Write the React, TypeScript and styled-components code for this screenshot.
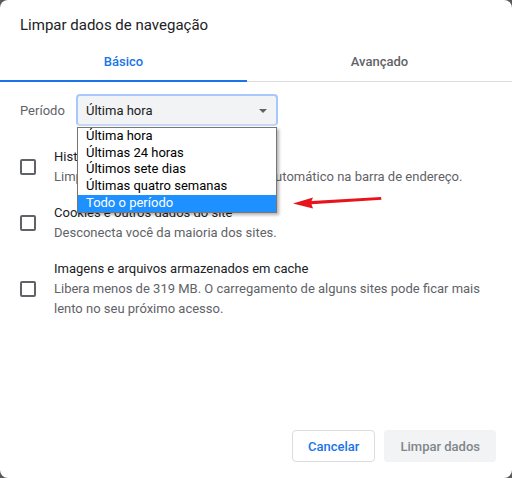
import React from "react";
import styled, { createGlobalStyle } from "styled-components";

const GlobalStyle = createGlobalStyle`
  html, body {
    margin: 0;
    padding: 0;
    background: #595959;
  }
  body {
    font-family: Roboto, "Noto Sans", "Liberation Sans", sans-serif;
  }
`;

const periods = [
  "Última hora",
  "Últimas 24 horas",
  "Últimos sete dias",
  "Últimas quatro semanas",
  "Todo o período",
];

const items = [
  {
    title: "Histórico de navegação",
    desc: ["Limpa o histórico e o preenchimento automático na barra de endereço."],
  },
  {
    title: "Cookies e outros dados do site",
    desc: ["Desconecta você da maioria dos sites."],
  },
  {
    title: "Imagens e arquivos armazenados em cache",
    desc: ["Libera menos de 319 MB. O carregamento de alguns sites pode ficar mais lento no seu próximo acesso."],
  },
];

export default function App() {
  return (
    <>
      <GlobalStyle />
      <Dialog>
        <Title>Limpar dados de navegação</Title>
        <Tabs>
          <Tab $active>Básico</Tab>
          <Tab>Avançado</Tab>
        </Tabs>
        <Body>
          <PeriodRow>
            <Label>Período</Label>
            <SelectWrap>
              <Select>
                Última hora
                <Caret />
              </Select>
              <ListBox>
                {periods.map((p, i) => (
                  <Option key={p} $selected={i === periods.length - 1}>
                    {p}
                  </Option>
                ))}
              </ListBox>
            </SelectWrap>
          </PeriodRow>
          <Items>
            {items.map((it) => (
              <Row key={it.title}>
                <Checkbox />
                <RowText>
                  <RowTitle>{it.title}</RowTitle>
                  {it.desc.map((d) => (
                    <RowDesc key={d}>{d}</RowDesc>
                  ))}
                </RowText>
              </Row>
            ))}
          </Items>
        </Body>
        <Footer>
          <CancelButton>Cancelar</CancelButton>
          <ClearButton>Limpar dados</ClearButton>
        </Footer>
        <Arrow width="100" height="20" viewBox="0 0 100 20">
          <polygon
            points="7,13.5 27,7.5 25.5,11 95,7 95.5,9.8 25.5,14.3 27,18.5"
            fill="#e8141c"
          />
        </Arrow>
      </Dialog>
    </>
  );
}

const Dialog = styled.div`
  position: relative;
  width: 512px;
  height: 478px;
  background: #fff;
  border-radius: 8px;
  display: flex;
  flex-direction: column;
  overflow: hidden;
`;

const Title = styled.div`
  padding: 15px 20px 0;
  font-size: 15px;
  line-height: 20px;
  color: #202124;
`;

const Tabs = styled.div`
  margin-top: 7px;
  display: flex;
  border-bottom: 1px solid #dadce0;
`;

const Tab = styled.div<{ $active?: boolean }>`
  position: relative;
  height: 39px;
  flex: ${(p) => (p.$active ? "0 0 247px" : "1")};
  display: flex;
  align-items: center;
  justify-content: center;
  font-size: 13px;
  font-weight: 500;
  color: ${(p) => (p.$active ? "#1a73e8" : "#5f6368")};
  &::after {
    content: "";
    display: ${(p) => (p.$active ? "block" : "none")};
    position: absolute;
    left: 0;
    right: 0;
    bottom: -1px;
    height: 2px;
    background: #1a73e8;
  }
`;

const Body = styled.div`
  padding: 0 20px;
`;

const PeriodRow = styled.div`
  margin-top: 12px;
  display: flex;
  align-items: center;
`;

const Label = styled.div`
  flex: 0 0 56px;
  font-size: 13px;
  color: #5f6368;
`;

const SelectWrap = styled.div`
  position: relative;
  z-index: 2;
`;

const Select = styled.div`
  position: relative;
  box-sizing: border-box;
  width: 202px;
  height: 32px;
  border: 2px solid #a8c7fa;
  border-bottom-color: #c5d7f2;
  border-radius: 4px;
  background: #f1f3f4;
  padding-left: 8px;
  display: flex;
  align-items: center;
  font-size: 13px;
  color: #202124;
`;

const Caret = styled.span`
  position: absolute;
  right: 9px;
  top: 13px;
  width: 0;
  height: 0;
  border-left: 4.5px solid transparent;
  border-right: 4.5px solid transparent;
  border-top: 4.5px solid #5f6368;
`;

const ListBox = styled.div`
  position: absolute;
  top: 33px;
  left: 1px;
  box-sizing: border-box;
  width: 200px;
  border: 1px solid #767676;
  background: #fff;
  box-shadow: 2px 2px 3px rgba(0, 0, 0, 0.3);
`;

const Option = styled.div<{ $selected?: boolean }>`
  padding-left: 8px;
  font-size: 13px;
  line-height: 16.7px;
  color: ${(p) => (p.$selected ? "#fff" : "#000")};
  background: ${(p) => (p.$selected ? "#1e90ff" : "transparent")};
`;

const Items = styled.div`
  margin-top: 21px;
  display: flex;
  flex-direction: column;
  gap: 16px;
`;

const Row = styled.div`
  display: flex;
  align-items: center;
  gap: 18px;
`;

const Checkbox = styled.div`
  flex: 0 0 auto;
  box-sizing: border-box;
  width: 16px;
  height: 16px;
  border: 2px solid #5f6368;
  border-radius: 2px;
`;

const RowText = styled.div`
  font-size: 13px;
  line-height: 20px;
`;

const RowTitle = styled.div`
  color: #202124;
`;

const RowDesc = styled.div`
  color: #5f6368;
`;

const Footer = styled.div`
  margin-top: auto;
  padding: 0 16px 16px;
  display: flex;
  justify-content: flex-end;
  gap: 9px;
`;

const Button = styled.button`
  height: 32px;
  border-radius: 4px;
  font-family: inherit;
  font-size: 13px;
  font-weight: 500;
  cursor: pointer;
`;

const CancelButton = styled(Button)`
  padding: 0 15px;
  border: 1px solid #dadce0;
  background: #fff;
  color: #1a73e8;
`;

const ClearButton = styled(Button)`
  padding: 0 16px;
  border: none;
  background: #f1f3f4;
  color: #80868b;
`;

const Arrow = styled.svg`
  position: absolute;
  left: 286px;
  top: 190px;
  z-index: 3;
`;
